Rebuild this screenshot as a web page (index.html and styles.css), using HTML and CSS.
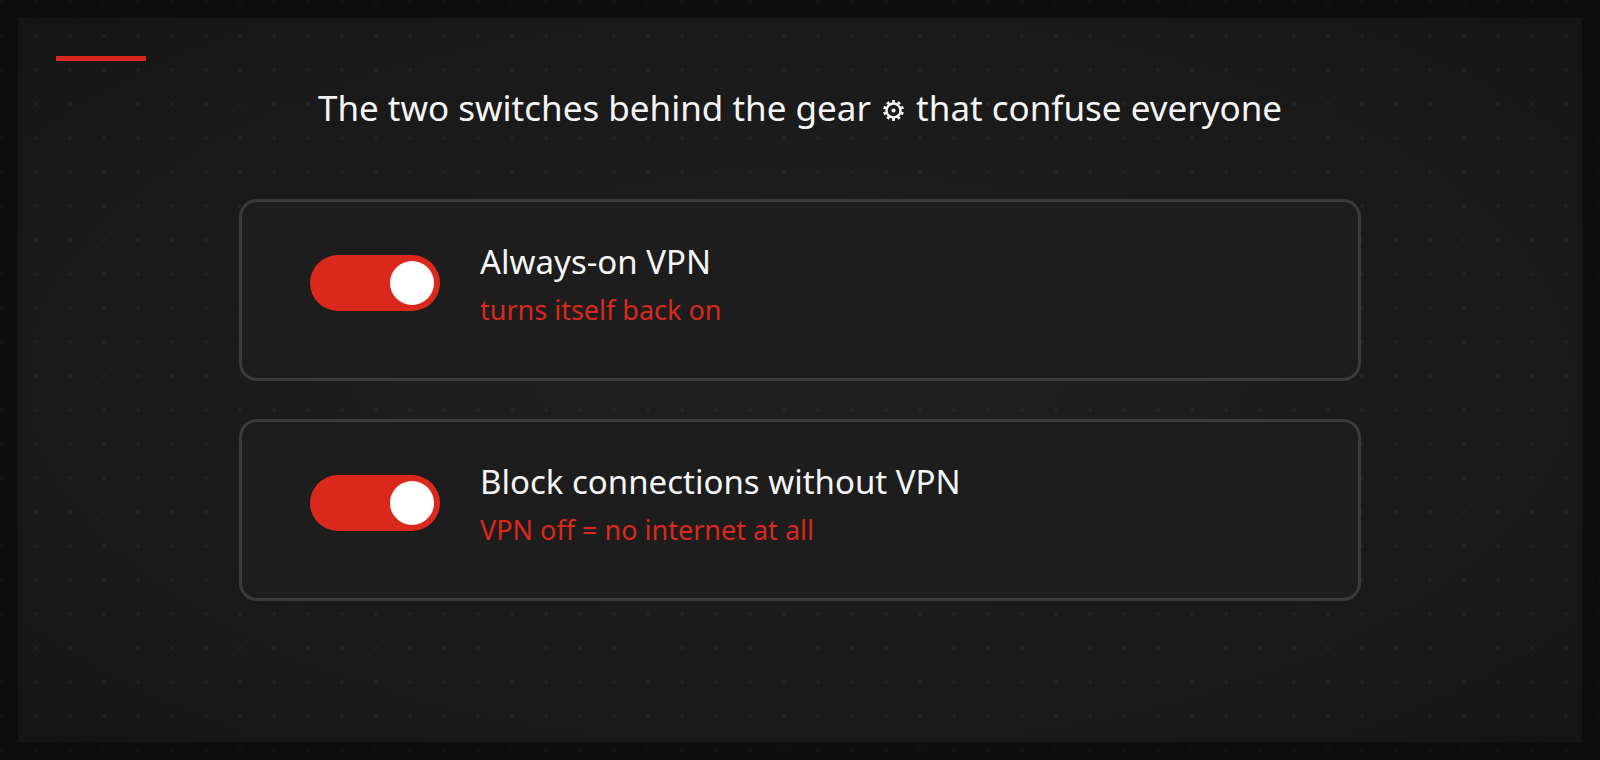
FILE: index.html
```html
<!DOCTYPE html>
<html lang="en">
<head>
<meta charset="utf-8">
<meta name="viewport" content="width=device-width, initial-scale=1">
<title>The two VPN switches</title>
<link rel="stylesheet" href="styles.css">
</head>
<body>
<main class="panel">
  <div class="accent"></div>
  <h1 class="heading">The two switches behind the gear
    <svg class="gear" viewBox="0 0 20 20" role="img" aria-label="settings">
      <circle class="gear-teeth" cx="10" cy="10" r="8.6" pathLength="100"/>
      <circle class="gear-ring" cx="10" cy="10" r="6.7"/>
      <circle class="gear-hub" cx="10" cy="10" r="2"/>
    </svg>
    that confuse everyone</h1>
  <div class="cards">
    <section class="card">
      <input class="switch" type="checkbox" role="switch" id="always-on" aria-describedby="always-on-note" checked>
      <div class="copy">
        <label class="title" for="always-on">Always-on VPN</label>
        <p class="note" id="always-on-note">turns itself back on</p>
      </div>
    </section>
    <section class="card">
      <input class="switch" type="checkbox" role="switch" id="block" aria-describedby="block-note" checked>
      <div class="copy">
        <label class="title" for="block">Block connections without VPN</label>
        <p class="note" id="block-note">VPN off = no internet at all</p>
      </div>
    </section>
  </div>
</main>
</body>
</html>
```
FILE: styles.css
```css
* {
  box-sizing: border-box;
}

body {
  margin: 0;
  min-height: 100vh;
  display: flex;
  border: 18px solid rgba(0, 0, 0, 0.4);
  background:
    radial-gradient(circle at 2px 2px, rgba(255, 255, 255, 0.05) 1px, transparent 2px) 0 0 / 34px 34px border-box,
    radial-gradient(ellipse at center, #202020 0%, #1b1b1b 50%, #151515 100%) border-box;
  color: #f5f5f5;
  font-family: "Noto Sans", "Open Sans", sans-serif;
}

.panel {
  flex: 1;
  padding: 38px;
}

.accent {
  width: 90px;
  height: 5px;
  background: #da291c;
}

.heading {
  margin: 22px 0 66px;
  font-size: 35px;
  line-height: 50px;
  font-weight: 400;
  text-align: center;
}

.gear {
  width: 21px;
  height: 21px;
  margin: 0 3px;
  fill: none;
  stroke: currentColor;
}

.gear-teeth {
  stroke-width: 2.6;
  stroke-dasharray: 5 5;
  stroke-dashoffset: -2.5;
}

.gear-ring {
  stroke-width: 2.3;
}

.gear-hub {
  fill: currentColor;
  stroke: none;
}

.cards {
  width: 76%;
  max-width: 1122px;
  margin: 0 auto;
  display: grid;
  gap: 38px;
}

.card {
  display: flex;
  align-items: flex-start;
  gap: 40px;
  padding: 36px 68px 48px;
  border: 3px solid #3a3a3a;
  border-radius: 18px;
  background: #1d1d1d;
}

.switch {
  appearance: none;
  flex: none;
  width: 130px;
  height: 56px;
  margin: 17px 0 0;
  padding: 6px;
  display: flex;
  border-radius: 28px;
  background: #555;
}

.switch::before {
  content: "";
  width: 44px;
  height: 44px;
  border-radius: 50%;
  background: #fff;
}

.switch:checked {
  justify-content: flex-end;
  background: #da291c;
}

.title {
  display: block;
  margin-bottom: 4px;
  font-size: 33px;
  line-height: 48px;
}

.note {
  margin: 0;
  font-size: 27px;
  line-height: 40px;
  color: #da291c;
}
```
